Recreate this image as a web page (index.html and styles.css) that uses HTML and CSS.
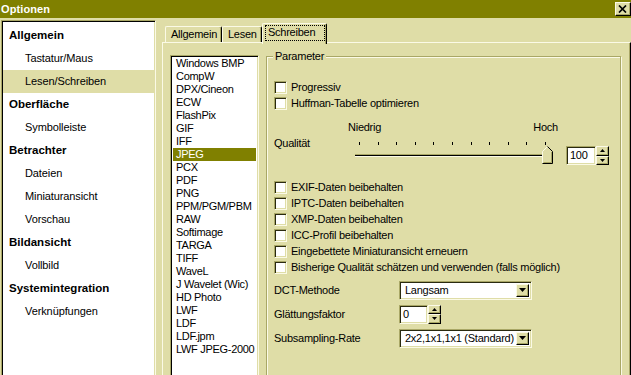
FILE: index.html
```html
<!DOCTYPE html>
<html lang="de">
<head>
<meta charset="utf-8">
<title>Optionen</title>
<link rel="stylesheet" href="styles.css">
</head>
<body>
<div class="window">
  <header class="titlebar">
    <span class="title">Optionen</span>
    <span class="close"><svg width="9" height="8" viewBox="0 0 9 8"><path d="M1 0.5L8 7.5M8 0.5L1 7.5" stroke="#000" stroke-width="1.7"/></svg></span>
  </header>
  <div class="main">
    <nav class="sidebar">
      <div class="nav-head">Allgemein</div>
      <div class="nav-item">Tastatur/Maus</div>
      <div class="nav-item selected">Lesen/Schreiben</div>
      <div class="nav-head">Oberfläche</div>
      <div class="nav-item">Symbolleiste</div>
      <div class="nav-head">Betrachter</div>
      <div class="nav-item">Dateien</div>
      <div class="nav-item">Miniaturansicht</div>
      <div class="nav-item">Vorschau</div>
      <div class="nav-head">Bildansicht</div>
      <div class="nav-item">Vollbild</div>
      <div class="nav-head">Systemintegration</div>
      <div class="nav-item">Verknüpfungen</div>
    </nav>
    <section class="tabs-area">
      <div class="tabstrip">
        <div class="tab tab-allgemein">Allgemein</div>
        <div class="tab tab-lesen">Lesen</div>
        <div class="tab tab-active"><span class="focus">Schreiben</span></div>
      </div>
      <div class="panel">
        <div class="formats">
          <div class="fmt">Windows BMP</div>
          <div class="fmt">CompW</div>
          <div class="fmt">DPX/Cineon</div>
          <div class="fmt">ECW</div>
          <div class="fmt">FlashPix</div>
          <div class="fmt">GIF</div>
          <div class="fmt">IFF</div>
          <div class="fmt selected">JPEG</div>
          <div class="fmt">PCX</div>
          <div class="fmt">PDF</div>
          <div class="fmt">PNG</div>
          <div class="fmt">PPM/PGM/PBM</div>
          <div class="fmt">RAW</div>
          <div class="fmt">Softimage</div>
          <div class="fmt">TARGA</div>
          <div class="fmt">TIFF</div>
          <div class="fmt">WaveL</div>
          <div class="fmt">J Wavelet (Wic)</div>
          <div class="fmt">HD Photo</div>
          <div class="fmt">LWF</div>
          <div class="fmt">LDF</div>
          <div class="fmt">LDF.jpm</div>
          <div class="fmt">LWF JPEG-2000</div>
        </div>
        <fieldset class="group">
          <legend class="legend">Parameter</legend>
          <div class="checks first-checks">
            <div class="check"><span class="cb"></span><span>Progressiv</span></div>
            <div class="check"><span class="cb"></span><span>Huffman-Tabelle optimieren</span></div>
          </div>
          <div class="quality">
            <span class="q-label">Qualität</span>
            <div class="slider">
              <div class="slider-labels"><span>Niedrig</span><span>Hoch</span></div>
              <div class="ticks"><i></i><i></i><i></i><i></i><i></i><i></i><i></i><i></i><i></i><i></i><i></i></div>
              <div class="track">
                <span class="thumb"><svg width="11" height="18" viewBox="0 0 11 18"><path d="M0.5 17.5V5.5L5.5 0.5L10.5 5.5V17.5Z" fill="#dfdda7"/><path d="M0.5 17V5.5L5.5 0.5" stroke="#fbfae6" fill="none"/><path d="M5.5 0.5L10.5 5.5V17.5H0.5" stroke="#000" fill="none"/><path d="M1.5 16.5H9.5V6" stroke="#a9a766" fill="none"/></svg></span>
              </div>
            </div>
            <div class="spinbox q-spin">
              <span class="edit edit-q">100</span>
              <span class="spin">
                <span class="spin-btn"><svg width="5" height="3" viewBox="0 0 5 3"><path d="M2.5 0L5 3H0Z" fill="#000"/></svg></span>
                <span class="spin-btn"><svg width="5" height="3" viewBox="0 0 5 3"><path d="M0 0H5L2.5 3Z" fill="#000"/></svg></span>
              </span>
            </div>
          </div>
          <div class="checks second-checks">
            <div class="check"><span class="cb"></span><span>EXIF-Daten beibehalten</span></div>
            <div class="check"><span class="cb"></span><span>IPTC-Daten beibehalten</span></div>
            <div class="check"><span class="cb"></span><span>XMP-Daten beibehalten</span></div>
            <div class="check"><span class="cb"></span><span>ICC-Profil beibehalten</span></div>
            <div class="check"><span class="cb"></span><span>Eingebettete Miniaturansicht erneuern</span></div>
            <div class="check"><span class="cb"></span><span>Bisherige Qualität schätzen und verwenden (falls möglich)</span></div>
          </div>
          <div class="fields">
            <div class="field-row">
              <span class="f-label">DCT-Methode</span>
              <div class="combo">
                <span class="combo-value">Langsam</span>
                <span class="drop"><svg width="7" height="4" viewBox="0 0 7 4"><path d="M0 0H7L3.5 4Z" fill="#000"/></svg></span>
              </div>
            </div>
            <div class="field-row">
              <span class="f-label">Glättungsfaktor</span>
              <div class="spinbox">
                <span class="edit edit-small">0</span>
                <span class="spin">
                  <span class="spin-btn"><svg width="5" height="3" viewBox="0 0 5 3"><path d="M2.5 0L5 3H0Z" fill="#000"/></svg></span>
                  <span class="spin-btn"><svg width="5" height="3" viewBox="0 0 5 3"><path d="M0 0H5L2.5 3Z" fill="#000"/></svg></span>
                </span>
              </div>
            </div>
            <div class="field-row">
              <span class="f-label">Subsampling-Rate</span>
              <div class="combo">
                <span class="combo-value">2x2,1x1,1x1 (Standard)</span>
                <span class="drop"><svg width="7" height="4" viewBox="0 0 7 4"><path d="M0 0H7L3.5 4Z" fill="#000"/></svg></span>
              </div>
            </div>
          </div>
        </fieldset>
      </div>
    </section>
  </div>
</div>
</body>
</html>
```

FILE: styles.css
```css
:root {
  --bg: #dfdda7;
  --hl: #fbfae6;
  --sh: #a9a766;
  --olive: #808000;
}

html, body {
  margin: 0;
  padding: 0;
  background: var(--bg);
  overflow: hidden;
}

body {
  font-family: "Liberation Sans", Arial, sans-serif;
  font-size: 11px;
  color: #000;
  letter-spacing: -0.25px;
}

.window {
  width: 631px;
  height: 375px;
  overflow: hidden;
  display: flex;
  flex-direction: column;
}

/* title bar */
.titlebar {
  flex: none;
  height: 18px;
  background: var(--olive);
  display: flex;
  align-items: center;
  justify-content: space-between;
}

.title {
  color: #fff;
  font-weight: bold;
  letter-spacing: 0.1px;
  padding-left: 1px;
  line-height: 18px;
}

.close {
  width: 16px;
  height: 14px;
  box-sizing: border-box;
  background: var(--bg);
  border-top: 1px solid var(--hl);
  border-left: 1px solid var(--hl);
  border-right: 1px solid #000;
  border-bottom: 1px solid #000;
  box-shadow: inset -1px -1px 0 var(--sh);
  display: flex;
  align-items: center;
  justify-content: center;
  padding-right: 1px;
}

.close svg { display: block; }

/* main */
.main {
  display: flex;
  height: 357px;
  padding-top: 2px;
  box-sizing: border-box;
}

.sidebar {
  flex: none;
  width: 155px;
  height: 380px;
  margin-left: 1px;
  margin-right: 6px;
  box-sizing: border-box;
  background: #fff;
  border-top: 1px solid var(--sh);
  border-left: 1px solid var(--sh);
  border-right: 1px solid var(--hl);
  box-shadow: inset 1px 1px 0 #000, inset -1px 0 0 var(--bg);
  padding-top: 3px;
  letter-spacing: -0.1px;
}

.nav-head,
.nav-item {
  height: 23px;
  line-height: 23px;
  white-space: nowrap;
}

.nav-head {
  font-weight: bold;
  font-size: 11.5px;
  padding-left: 7px;
  letter-spacing: 0;
}

.nav-item {
  padding-left: 23px;
}

.nav-item.selected {
  background: var(--bg);
  margin-left: 1px;
  padding-left: 22px;
  margin-right: 1px;
}

/* tabs */
.tabs-area {
  flex: 1;
  display: flex;
  flex-direction: column;
}

.tabstrip {
  flex: none;
  height: 22px;
  display: flex;
  align-items: flex-end;
  padding-left: 3px;
}

.tab {
  box-sizing: border-box;
  height: 16px;
  line-height: 14px;
  border-top: 1px solid var(--hl);
  border-left: 1px solid var(--hl);
  border-right: 1px solid #000;
  box-shadow: inset -1px 0 0 var(--sh);
  border-radius: 2px 2px 0 0;
  padding-left: 5px;
  white-space: nowrap;
}

.tab-allgemein { width: 57px; }
.tab-lesen { width: 40px; padding-left: 5px; }

.tab-active {
  width: 65px;
  height: 21px;
  margin-bottom: -2px;
  position: relative;
  z-index: 1;
  background: var(--bg);
  padding: 1px 1px 0 2px;
}

.focus {
  display: block;
  height: 16px;
  line-height: 15px;
  outline: 1px dotted #000;
  outline-offset: -1px;
  padding-left: 3px;
}

/* panel */
.panel {
  flex: none;
  height: 360px;
  box-sizing: border-box;
  border-top: 1px solid var(--hl);
  border-left: 1px solid var(--hl);
  border-right: 1px solid #000;
  box-shadow: inset -1px 0 0 var(--sh), inset 1px 1px 0 var(--bg);
  padding: 12px 9px 0 7px;
  display: flex;
  align-items: flex-start;
  gap: 7px;
}

.formats {
  flex: none;
  width: 89px;
  height: 340px;
  box-sizing: border-box;
  background: #fff;
  border-top: 1px solid var(--sh);
  border-left: 1px solid var(--sh);
  border-right: 1px solid var(--hl);
  box-shadow: inset 1px 1px 0 #000, inset -1px 0 0 var(--bg);
  padding: 1px 2px 0 2px;
  letter-spacing: -0.3px;
}

.fmt {
  height: 13px;
  line-height: 13px;
  padding-left: 3px;
  white-space: nowrap;
}

.fmt.selected {
  background: var(--olive);
  color: #fff;
}

/* group box */
.group {
  flex: 1;
  min-width: 0;
  margin: -5px 0 0 0;
  padding: 0 0 0 7px;
  height: 340px;
  box-sizing: border-box;
  border: 1px solid var(--sh);
  box-shadow: inset 1px 1px 0 var(--hl), 1px 1px 0 var(--hl);
}

.legend {
  padding: 0 2px;
  margin-left: -1px;
  line-height: 12px;
  background: var(--bg);
}

.checks {
  display: flex;
  flex-direction: column;
}

.first-checks { margin-top: 17px; }

.check {
  height: 16px;
  display: flex;
  align-items: center;
  gap: 4px;
  white-space: nowrap;
}

.cb {
  flex: none;
  width: 13px;
  height: 13px;
  box-sizing: border-box;
  background: #fff;
  border-top: 1px solid var(--sh);
  border-left: 1px solid var(--sh);
  border-right: 1px solid var(--hl);
  border-bottom: 1px solid var(--hl);
  box-shadow: inset 1px 1px 0 #2a2a10, inset -1px -1px 0 var(--bg);
}

/* quality slider */
.quality {
  display: flex;
  align-items: flex-start;
  margin-top: 10px;
}

.q-label {
  flex: none;
  width: 74px;
  margin-top: 16px;
  line-height: 13px;
}

.slider {
  flex: none;
  width: 211px;
}

.slider-labels {
  display: flex;
  justify-content: space-between;
  line-height: 13px;
  padding-right: 1px;
}

.ticks {
  display: flex;
  justify-content: space-between;
  margin: 8px 13px 0 11px;
  height: 3px;
}

.ticks i {
  display: block;
  width: 1px;
  height: 3px;
  background: #000;
}

.track {
  position: relative;
  margin: 9px 0 0 7px;
  width: 196px;
  height: 1px;
  border-top: 1px solid var(--sh);
  border-bottom: 1px solid var(--hl);
  background: #000;
}

.thumb {
  position: absolute;
  left: 187px;
  top: -9px;
  display: block;
  line-height: 0;
}

.spinbox {
  display: flex;
  align-items: stretch;
  height: 19px;
}

.q-spin {
  margin-top: 25px;
  margin-left: 7px;
}

.edit {
  box-sizing: border-box;
  background: #fff;
  border-top: 1px solid var(--sh);
  border-left: 1px solid var(--sh);
  border-right: 1px solid var(--hl);
  border-bottom: 1px solid var(--hl);
  box-shadow: inset 1px 1px 0 #2a2a10, inset -1px -1px 0 var(--bg);
  line-height: 17px;
  padding-left: 3px;
}

.edit-q { width: 30px; }
.edit-small { width: 29px; }

.spin {
  display: flex;
  flex-direction: column;
  width: 13px;
}

.spin-btn {
  flex: 1;
  box-sizing: border-box;
  background: var(--bg);
  border-top: 1px solid var(--hl);
  border-left: 1px solid var(--hl);
  border-right: 1px solid #000;
  border-bottom: 1px solid #000;
  box-shadow: inset -1px -1px 0 var(--sh);
  display: flex;
  align-items: center;
  justify-content: center;
}

.spin-btn svg { display: block; }

.second-checks { margin-top: 14px; }

/* field rows */
.fields {
  margin-top: 5px;
  display: flex;
  flex-direction: column;
  gap: 4px;
}

.field-row {
  display: flex;
  align-items: center;
  height: 20px;
}

.f-label {
  flex: none;
  width: 125px;
}

.combo {
  box-sizing: border-box;
  width: 133px;
  height: 19px;
  background: #fff;
  border-top: 1px solid var(--sh);
  border-left: 1px solid var(--sh);
  border-right: 1px solid var(--hl);
  border-bottom: 1px solid var(--hl);
  box-shadow: inset 1px 1px 0 #2a2a10, inset -1px -1px 0 var(--bg);
  display: flex;
  align-items: stretch;
  padding: 2px;
}

.combo-value {
  flex: 1;
  line-height: 13px;
  padding-left: 3px;
  white-space: nowrap;
  overflow: hidden;
}

.drop {
  flex: none;
  width: 13px;
  box-sizing: border-box;
  background: var(--bg);
  border-top: 1px solid var(--hl);
  border-left: 1px solid var(--hl);
  border-right: 1px solid #000;
  border-bottom: 1px solid #000;
  box-shadow: inset -1px -1px 0 var(--sh);
  display: flex;
  align-items: center;
  justify-content: center;
}

.drop svg { display: block; }
```
